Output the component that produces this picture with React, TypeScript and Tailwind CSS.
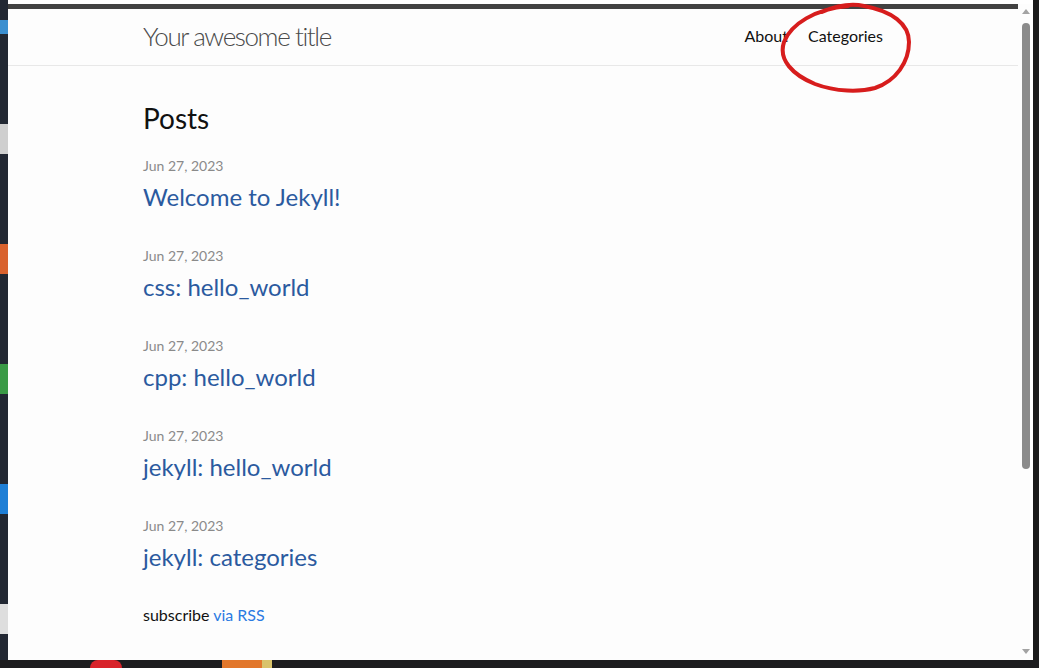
import React from "react";

const posts = [
  "Welcome to Jekyll!",
  "css: hello_world",
  "cpp: hello_world",
  "jekyll: hello_world",
  "jekyll: categories",
];

const font = { fontFamily: "Lato, 'Open Sans', sans-serif" };

export default function App() {
  return (
    <div className="relative w-[1039px] h-[668px] overflow-hidden bg-[#1b2029] flex flex-col" style={font}>
      <div className="flex h-[660px]">
        {/* left desktop strip */}
        <div className="w-[8px] flex flex-col bg-[#222833]">
          <div className="h-[20px]" />
          <div className="h-[14px] bg-[#3b8fd0]" />
          <div className="h-[90px]" />
          <div className="h-[30px] bg-[#cfcfcf]" />
          <div className="h-[90px]" />
          <div className="h-[30px] bg-[#d9622e]" />
          <div className="h-[90px]" />
          <div className="h-[30px] bg-[#3a9a46]" />
          <div className="h-[90px]" />
          <div className="h-[30px] bg-[#1f7fd6]" />
          <div className="h-[90px]" />
          <div className="h-[30px] bg-[#dedede]" />
        </div>
        {/* browser window */}
        <div className="w-[1025px] flex flex-col bg-[#fdfdfd]">
          <div className="h-[4px] bg-white" />
          <div className="flex flex-1 min-h-0">
            <div className="w-[1010px] flex flex-col">
              <header className="border-t-[5px] border-t-[#424242] border-b border-b-[#e8e8e8] h-[62px]">
                <div className="mx-auto max-w-[800px] px-[30px] flex items-center justify-between h-[56px]">
                  <span className="text-[26px] font-light text-[#4a4a4a] tracking-[-1.4px] -mt-[2px]">Your awesome title</span>
                  <nav className="flex gap-[20px] text-[16px] text-[#111111] -mt-[2px]">
                    <span>About</span>
                    <span>Categories</span>
                  </nav>
                </div>
              </header>
              <main className="mx-auto w-full max-w-[800px] px-[30px] pt-[34px]">
                <h2 className="text-[28px] leading-[36px] text-[#111111]">Posts</h2>
                <ul className="mt-[19px]">
                  {posts.map((p) => (
                    <li key={p} className="mb-[30px]">
                      <div className="text-[14px] leading-[21px] text-[#8a8a8a]">Jun 27, 2023</div>
                      <div className="mt-[3px] text-[24px] leading-[36px] text-[#2b5a9f]">{p}</div>
                    </li>
                  ))}
                </ul>
                <p className="text-[16px] leading-[20px] text-[#111111]">
                  subscribe <span className="text-[#2a7ae2]">via RSS</span>
                </p>
              </main>
            </div>
            {/* scrollbar */}
            <div className="w-[15px] flex flex-col items-center bg-[#fdfdfd]">
              <div className="mt-[5px] w-0 h-0 border-l-[4px] border-r-[4px] border-b-[5px] border-l-transparent border-r-transparent border-b-[#a3a3a3]" />
              <div className="mt-[9px] w-[8px] h-[446px] rounded-[4px] bg-[#8b8b8b]" />
              <div className="flex-1" />
              <div className="mb-[6px] w-0 h-0 border-l-[4px] border-r-[4px] border-t-[5px] border-l-transparent border-r-transparent border-t-[#a3a3a3]" />
            </div>
          </div>
        </div>
        {/* right strip */}
        <div className="w-[6px] bg-[#1a1a1a]" />
      </div>
      {/* bottom desktop strip */}
      <div className="h-[8px] flex bg-[#1d1d1f]">
        <div className="w-[90px]" />
        <div className="w-[32px] bg-[#d8232a] rounded-t-full" />
        <div className="w-[100px]" />
        <div className="w-[40px] bg-[#e2772b]" />
        <div className="w-[10px] bg-[#d9c36a]" />
      </div>
      {/* red annotation */}
      <svg className="absolute left-0 top-0 pointer-events-none" width="1039" height="668">
        <path
          d="M 848 6 C 815 9, 791 24, 784 42 C 778 60, 793 75, 815 84 C 836 92, 860 92, 875 88 C 896 81, 909 62, 909 42 C 909 24, 892 11, 864 6 C 850 3, 836 6, 822 12"
          fill="none"
          stroke="#d71d1d"
          strokeWidth="4"
          strokeLinecap="round"
        />
      </svg>
    </div>
  );
}
